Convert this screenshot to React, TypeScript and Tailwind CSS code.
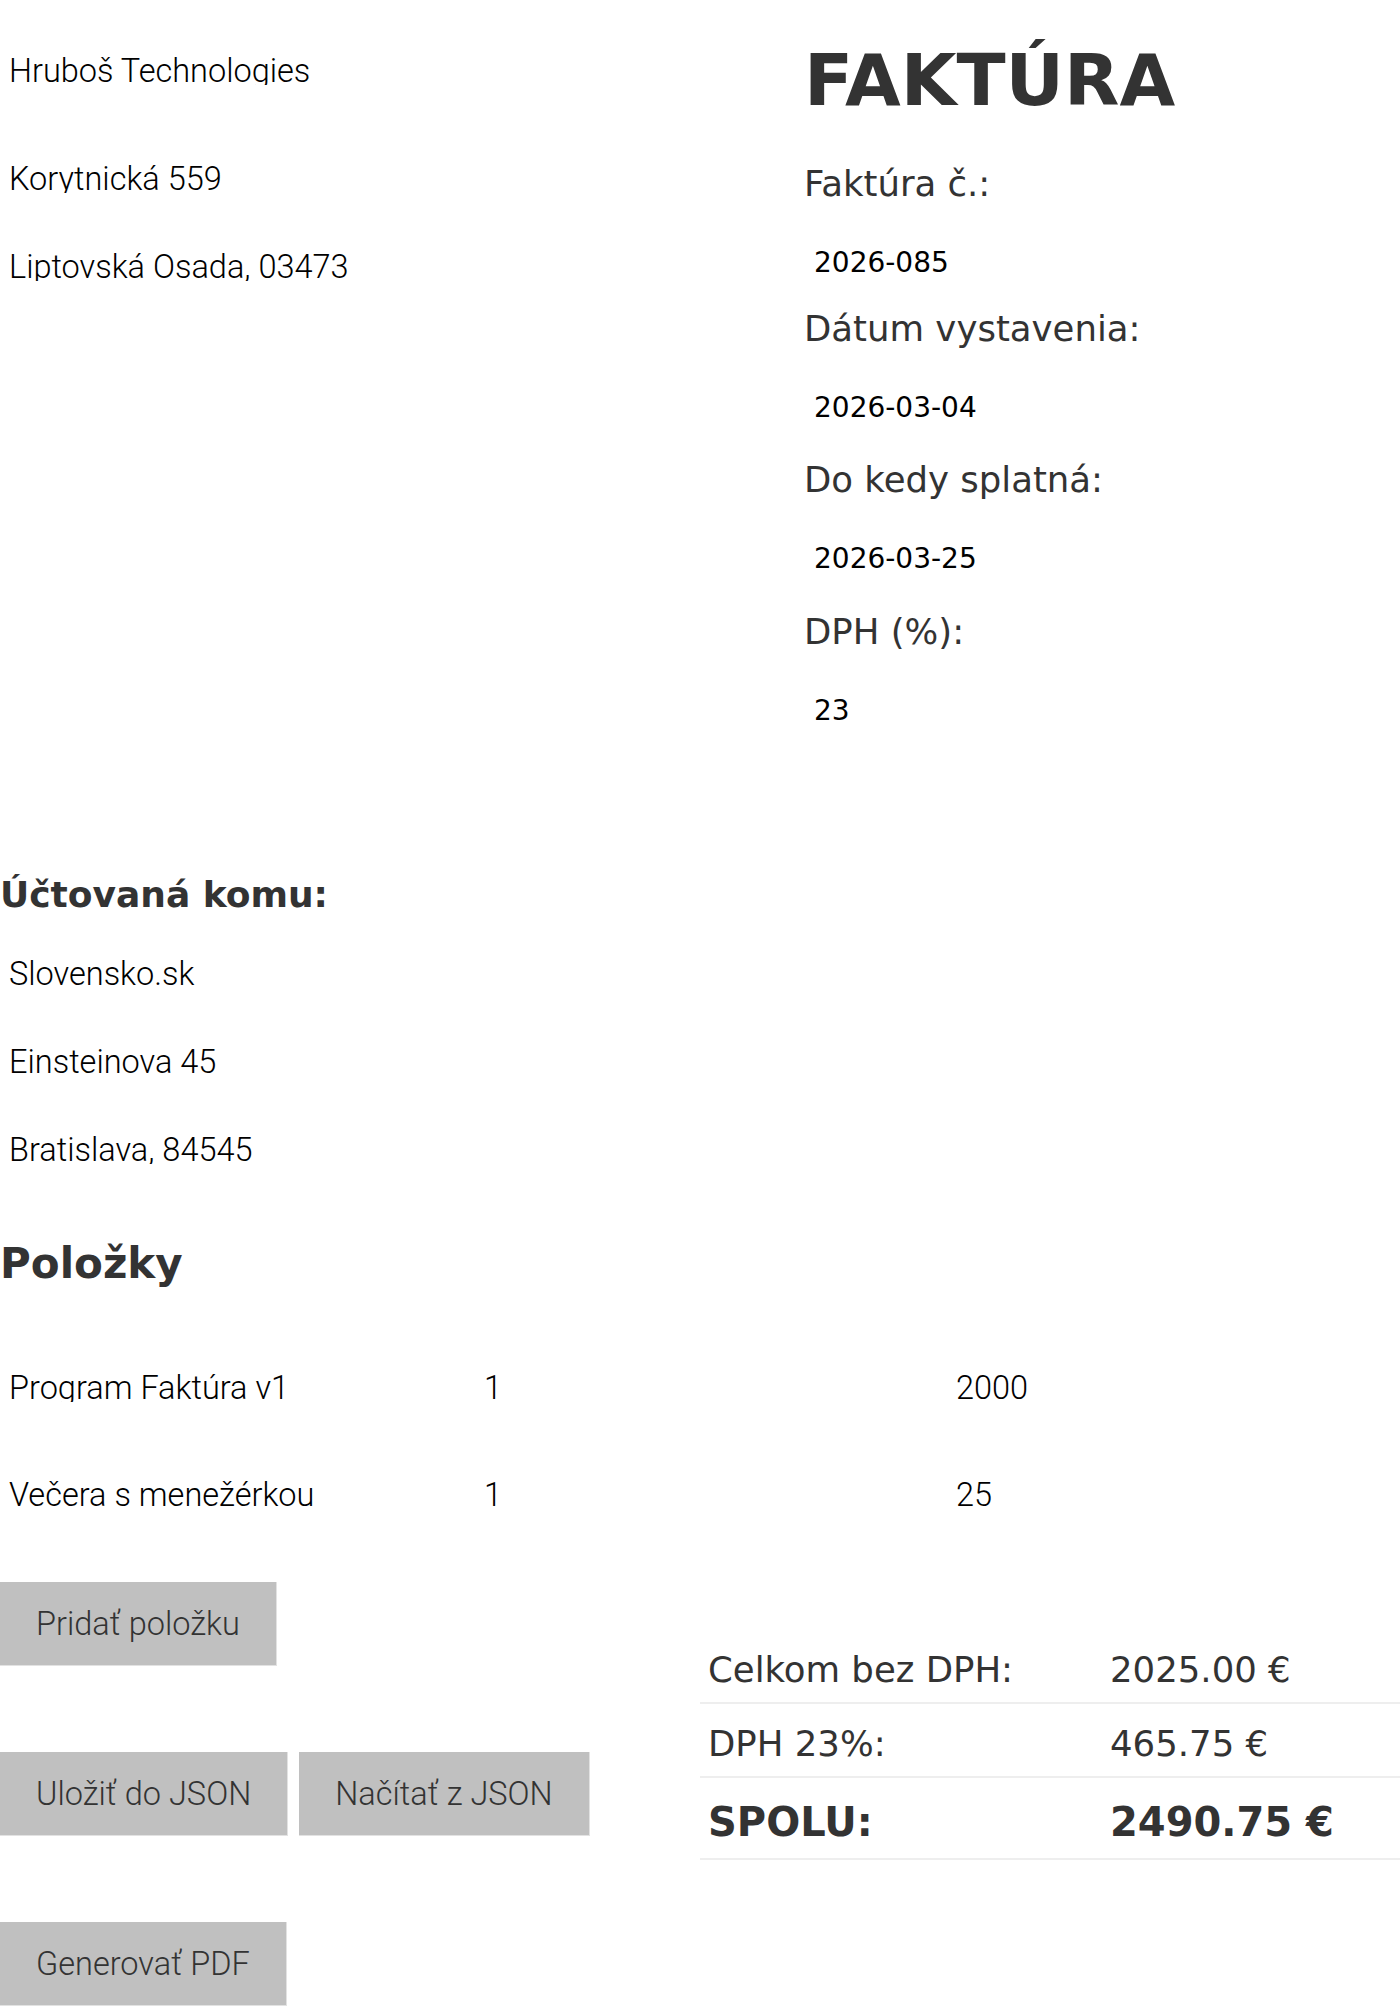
import { useState } from "react";

const dejavu = "font-['DejaVu_Sans',sans-serif]";
const roboto = "font-['Roboto',sans-serif] font-light";

interface Item {
  name: string;
  qty: number;
  price: number;
}

// input whose box is a bit too short for the font: descenders get cut off
function ClippedInput({ value }: { value: string }) {
  return (
    <div className="h-[33px] overflow-hidden">
      <input
        defaultValue={value}
        className={`${roboto} block w-full bg-transparent pl-[9px] pr-2 text-[32.5px] leading-[38px] text-black outline-none`}
      />
    </div>
  );
}

function Field({ label, value, gap }: { label: string; value: string; gap: string }) {
  return (
    <div className={gap}>
      <p className={`${dejavu} text-[35.5px] leading-[36px] text-[#333]`}>{label}</p>
      <input
        defaultValue={value}
        className={`${dejavu} mt-[45px] block w-[300px] bg-transparent pl-[10px] text-[28px] leading-[32px] text-black outline-none`}
      />
    </div>
  );
}

function GrayButton({ children }: { children: string }) {
  return (
    <button
      className={`${roboto} h-[84px] bg-[#c0c0c0] px-[36px] text-[32.5px] leading-[38px] text-[#333] border-r border-b border-[#e2e2e2]`}
    >
      {children}
    </button>
  );
}

function formatEur(value: number): string {
  return value.toFixed(2) + " €";
}

export default function App() {
  const [items] = useState<Item[]>([
    { name: "Program Faktúra v1", qty: 1, price: 2000 },
    { name: "Večera s menežérkou", qty: 1, price: 25 },
  ]);
  const vat = 23;

  const subtotal = items.reduce((sum, it) => sum + it.qty * it.price, 0);
  const vatAmount = (subtotal * vat) / 100;
  const total = subtotal + vatAmount;

  return (
    <div className="w-[1400px] min-h-[2008px] bg-white text-[#333]">
      {/* Header: supplier + invoice meta */}
      <div className="grid grid-cols-[804px_1fr]">
        <div className="pt-[52px]">
          <ClippedInput value="Hruboš Technologies" />
          <div className="mt-[75px]">
            <ClippedInput value="Korytnická 559" />
          </div>
          <div className="mt-[55px]">
            <ClippedInput value="Liptovská Osada, 03473" />
          </div>
        </div>

        <div className="pt-[44px]">
          <h1 className={`${dejavu} text-[72px] leading-[72px] font-bold text-[#333]`}>FAKTÚRA</h1>
          <Field label="Faktúra č.:" value="2026-085" gap="mt-[50px]" />
          <Field label="Dátum vystavenia:" value="2026-03-04" gap="mt-[32px]" />
          <Field label="Do kedy splatná:" value="2026-03-25" gap="mt-[38px]" />
          <Field label="DPH (%):" value={String(vat)} gap="mt-[39px]" />
        </div>
      </div>

      {/* Recipient */}
      <h3 className={`${dejavu} mt-[150px] text-[36px] leading-[36px] font-bold text-[#333]`}>
        Účtovaná komu:
      </h3>
      <div className="mt-[42px] w-[700px]">
        <ClippedInput value="Slovensko.sk" />
        <div className="mt-[55px]">
          <ClippedInput value="Einsteinova 45" />
        </div>
        <div className="mt-[55px]">
          <ClippedInput value="Bratislava, 84545" />
        </div>
      </div>

      {/* Items */}
      <h2 className={`${dejavu} mt-[79px] text-[42px] leading-[42px] font-bold text-[#333]`}>Položky</h2>
      <div className="mt-[84px] flex flex-col gap-[74px]">
        {items.map((it) => (
          <div key={it.name} className="grid grid-cols-[475px_472px_1fr]">
            <ClippedInput value={it.name} />
            <ClippedInput value={String(it.qty)} />
            <ClippedInput value={String(it.price)} />
          </div>
        ))}
      </div>

      {/* Actions + totals */}
      <div className="mt-[73px] flex items-start">
        <div className="w-[700px] flex flex-col items-start gap-[86px]">
          <GrayButton>Pridať položku</GrayButton>
          <div className="flex gap-[11px]">
            <GrayButton>Uložiť do JSON</GrayButton>
            <GrayButton>Načítať z JSON</GrayButton>
          </div>
          <GrayButton>Generovať PDF</GrayButton>
        </div>

        <div className={`${dejavu} mt-[48px] flex-1 text-[#333]`}>
          <div className="grid grid-cols-[402px_1fr] border-b-2 border-[#eeeeee] text-[35.5px] leading-[52px]">
            <div className="pl-2 pt-[14px] pb-[6px]">Celkom bez DPH:</div>
            <div className="pl-2 pt-[14px] pb-[6px]">{formatEur(subtotal)}</div>
          </div>
          <div className="grid grid-cols-[402px_1fr] border-b-2 border-[#eeeeee] text-[35.5px] leading-[52px]">
            <div className="pl-2 pt-[14px] pb-[6px]">DPH {vat}%:</div>
            <div className="pl-2 pt-[14px] pb-[6px]">{formatEur(vatAmount)}</div>
          </div>
          <div className="grid grid-cols-[402px_1fr] border-b-2 border-[#eeeeee] text-[40px] leading-[60px] font-bold">
            <div className="pl-2 pt-[14px] pb-[6px]">SPOLU:</div>
            <div className="pl-2 pt-[14px] pb-[6px]">{formatEur(total)}</div>
          </div>
        </div>
      </div>
    </div>
  );
}
